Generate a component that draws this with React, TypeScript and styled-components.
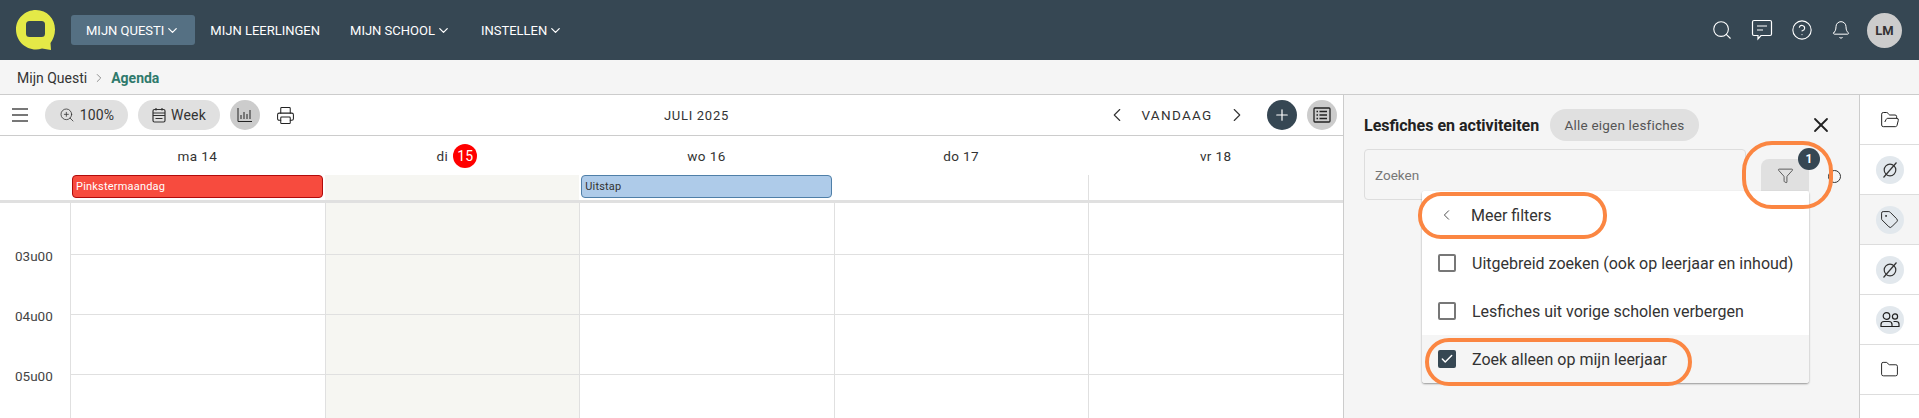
import React from 'react';
import styled, { createGlobalStyle } from 'styled-components';
import {
  Bell,
  Check,
  ChevronDown,
  ChevronLeft,
  ChevronRight,
  CircleHelp,
  Folder,
  FolderOpen,
  Funnel,
  Plus,
  Printer,
  Search,
  Tag,
  X,
  ZoomIn,
} from 'lucide-react';

const GlobalStyle = createGlobalStyle`
  html, body {
    margin: 0;
    padding: 0;
    background: #fff;
    overflow: hidden;
  }
  * { box-sizing: border-box; }
  body { font-family: Roboto, "Liberation Sans", sans-serif; color: #333; }
`;

const Page = styled.div`
  width: 1919px;
  height: 418px;
  overflow: hidden;
  display: flex;
  flex-direction: column;
`;

// top bar
const Header = styled.header`
  height: 60px;
  flex: none;
  background: #364753;
  display: flex;
  align-items: center;
  padding: 0 17px 0 16px;
`;

const LogoWrap = styled.div`
  width: 40px;
  height: 40px;
  margin-right: 15px;
`;

const Nav = styled.nav`
  display: flex;
  align-items: center;
`;

const NavItem = styled.div<{ $active?: boolean }>`
  height: 30px;
  display: flex;
  align-items: center;
  gap: 1px;
  padding: 0 15px;
  border-radius: 3px;
  color: #fff;
  font-size: 13px;
  white-space: nowrap;
  background: ${(p) => (p.$active ? '#557083' : 'transparent')};
`;

const HeaderIcons = styled.div`
  margin-left: auto;
  display: flex;
  align-items: center;
  gap: 18px;
  color: #fff;
`;

const Avatar = styled.div`
  width: 35px;
  height: 35px;
  margin-left: -2px;
  border-radius: 50%;
  background: #ccc;
  color: #333;
  font-size: 13px;
  font-weight: 700;
  display: flex;
  align-items: center;
  justify-content: center;
`;

// breadcrumb
const Breadcrumb = styled.div`
  height: 35px;
  flex: none;
  background: #f5f5f5;
  border-bottom: 1px solid #ccc;
  display: flex;
  align-items: center;
  gap: 5px;
  padding: 1px 0 0 17px;
  font-size: 14px;
`;

const CrumbCurrent = styled.span`
  color: #2f7a6c;
  font-weight: 700;
`;

const Main = styled.div`
  flex: 1;
  display: flex;
  min-height: 0;
`;

const CalendarArea = styled.section`
  width: 1343px;
  flex: none;
  display: flex;
  flex-direction: column;
`;

// agenda toolbar
const Toolbar = styled.div`
  height: 41px;
  flex: none;
  border-bottom: 1px solid #ccc;
  display: flex;
  align-items: center;
  padding: 0 6px 0 12px;
`;

const ToolGroup = styled.div`
  width: 652px;
  display: flex;
  align-items: center;
`;

const MenuButton = styled.div`
  width: 16px;
  height: 14px;
  margin-right: 17px;
  border-top: 2px solid #777;
  border-bottom: 2px solid #777;
  position: relative;

  &::after {
    content: '';
    position: absolute;
    left: 0;
    right: 0;
    top: 4px;
    height: 2px;
    background: #777;
  }
`;

const Pill = styled.div<{ $width: number }>`
  width: ${(p) => p.$width}px;
  height: 30px;
  margin-right: 10px;
  border-radius: 15px;
  background: #e0e0e0;
  display: flex;
  align-items: center;
  justify-content: center;
  gap: 5px;
  font-size: 14px;
  letter-spacing: 0.2px;
`;

const RoundButton = styled.div<{ $bg: string; $color: string }>`
  width: 30px;
  height: 30px;
  border-radius: 50%;
  background: ${(p) => p.$bg};
  color: ${(p) => p.$color};
  display: flex;
  align-items: center;
  justify-content: center;
  flex: none;
`;

const PrintIcon = styled.div`
  display: flex;
  margin-left: 16px;
  color: #222;
`;

const MonthTitle = styled.div`
  font-size: 13px;
  letter-spacing: 0.7px;
  white-space: nowrap;
`;

const DateNav = styled.div`
  margin-left: auto;
  display: flex;
  align-items: center;
  gap: 8px;
`;

const Today = styled.div`
  width: 82px;
  text-align: center;
  font-size: 13.5px;
  letter-spacing: 1.3px;
`;

const ChevronBox = styled.div`
  display: flex;
  color: #333;
`;

const ToolEnd = styled.div`
  display: flex;
  gap: 10px;
  margin-left: 19px;
`;

// calendar grid
const WeekRow = styled.div<{ $height: number }>`
  height: ${(p) => p.$height}px;
  flex: none;
  display: grid;
  grid-template-columns: 70px repeat(5, 1fr);
`;

const DayTitle = styled.div<{ $today?: boolean }>`
  display: flex;
  align-items: center;
  justify-content: center;
  gap: 5px;
  font-size: 13.5px;
  letter-spacing: 0.4px;
  padding-left: ${(p) => (p.$today ? '10px' : '0')};
`;

const TodayBadge = styled.span`
  width: 24px;
  height: 24px;
  border-radius: 50%;
  background: #f00;
  color: #fff;
  display: flex;
  align-items: center;
  justify-content: center;
  font-size: 14px;
  letter-spacing: 0;
`;

const AllDayBand = styled.div`
  flex: none;
  border-bottom: 3px solid #e0e0e0;
`;

const AllDayCell = styled.div<{ $today?: boolean; $line?: boolean }>`
  padding: 0 2px;
  background: ${(p) => (p.$today ? '#f6f6f2' : 'transparent')};
  border-left: ${(p) => (p.$line ? '1px solid #e0e0e0' : 'none')};
`;

const EventChip = styled.div<{ $bg: string; $border: string; $color: string }>`
  height: 23px;
  border-radius: 4px;
  background: ${(p) => p.$bg};
  border: 1px solid ${(p) => p.$border};
  color: ${(p) => p.$color};
  font-size: 11px;
  display: flex;
  align-items: center;
  padding-left: 3px;
  letter-spacing: 0.2px;
`;

const HourLabel = styled.div`
  font-size: 13.5px;
  padding-left: 15px;
  line-height: 16px;
  margin-top: -6px;
  color: #444;
`;

const HourCell = styled.div<{ $today?: boolean; $line?: boolean }>`
  border-left: 1px solid #e0e0e0;
  border-top: ${(p) => (p.$line ? '1px solid #e0e0e0' : 'none')};
  background: ${(p) => (p.$today ? '#f6f6f2' : 'transparent')};
`;

// side panel
const Panel = styled.aside`
  width: 516px;
  flex: none;
  position: relative;
  background: #f5f5f5;
  border-left: 1px solid #ccc;
  padding: 14px 0 0 20px;
`;

const PanelHead = styled.div`
  display: flex;
  align-items: center;
  height: 32px;
`;

const PanelTitle = styled.h2`
  width: 186px;
  flex: none;
  margin: 0;
  font-size: 16px;
  font-weight: 700;
  color: #222;
  white-space: nowrap;
`;

const ScopePill = styled.div`
  width: 149px;
  height: 32px;
  border-radius: 16px;
  background: #e0e0e0;
  color: #555;
  font-size: 13.5px;
  letter-spacing: 0.2px;
  display: flex;
  align-items: center;
  justify-content: center;
  white-space: nowrap;
`;

const CloseButton = styled.div`
  margin-left: 110px;
  display: flex;
  color: #222;
`;

const SearchRow = styled.div`
  display: flex;
  align-items: center;
  margin-top: 8px;
`;

const SearchBox = styled.div`
  width: 382px;
  height: 51px;
  border: 1px solid #ddd;
  border-radius: 4px;
  display: flex;
  align-items: center;
  padding-left: 10px;
  font-size: 13.5px;
  color: #777;
`;

const FilterButton = styled.div`
  width: 48px;
  height: 32px;
  margin: 0 0 9px 15px;
  border-radius: 8px 8px 0 0;
  background: #e0e0e0;
  color: #444;
  display: flex;
  align-items: center;
  justify-content: center;
  align-self: flex-end;
  position: relative;
`;

const CountBadge = styled.span`
  position: absolute;
  top: -11px;
  right: -11px;
  width: 22px;
  height: 22px;
  border-radius: 50%;
  background: #364753;
  color: #fff;
  font-size: 12px;
  font-weight: 700;
  display: flex;
  align-items: center;
  justify-content: center;
`;

const ResetCircle = styled.span`
  position: absolute;
  left: 484px;
  top: 75px;
  width: 13px;
  height: 13px;
  border: 1px solid #333;
  border-radius: 50%;
`;

const Dropdown = styled.div`
  position: absolute;
  left: 78px;
  top: 96px;
  width: 387px;
  background: #fff;
  border-radius: 3px;
  box-shadow: 0 1px 2px rgba(0, 0, 0, 0.4);
  overflow: hidden;
`;

const MenuRow = styled.div<{ $selected?: boolean }>`
  height: 48px;
  display: flex;
  align-items: center;
  padding-left: 16px;
  gap: 16px;
  font-size: 16px;
  color: #333;
  white-space: nowrap;
  background: ${(p) => (p.$selected ? '#f5f5f5' : '#fff')};
`;

const BackIcon = styled.div`
  width: 17px;
  display: flex;
  color: #333;
`;

const CheckBox = styled.span<{ $checked?: boolean }>`
  width: 18px;
  height: 18px;
  border-radius: 2px;
  border: 2px solid ${(p) => (p.$checked ? '#364753' : '#777')};
  background: ${(p) => (p.$checked ? '#364753' : 'transparent')};
  color: #fff;
  display: flex;
  align-items: center;
  justify-content: center;
  flex: none;
`;

// orange marks drawn over the screenshot
const Ring = styled.div<{ $left: number; $top: number; $width: number; $height: number; $radius: number }>`
  position: absolute;
  left: ${(p) => p.$left}px;
  top: ${(p) => p.$top}px;
  width: ${(p) => p.$width}px;
  height: ${(p) => p.$height}px;
  border: 4px solid #fb8642;
  border-radius: ${(p) => p.$radius}px;
  pointer-events: none;
`;

// right rail
const Rail = styled.aside`
  flex: 1;
  border-left: 1px solid #ccc;
  background: #fff;
`;

const RailItem = styled.div<{ $active?: boolean }>`
  height: 50px;
  border-bottom: 1px solid #ddd;
  background: ${(p) => (p.$active ? '#f5f5f5' : '#fff')};
  display: flex;
  align-items: center;
  justify-content: center;
  color: #222;
`;

const RailCircle = styled.div`
  width: 28px;
  height: 28px;
  border-radius: 50%;
  background: #e2e8ed;
  display: flex;
  align-items: center;
  justify-content: center;
`;

const Logo = () => (
  <svg width="40" height="40" viewBox="0 0 40 40">
    <path
      d="M20 0C31 0 39 8.500 39 19.500C39 25 37 29.500 34.500 33L35 40L26 38.500C24 39 22 39.500 20 39.500C9 39.500 0 30.500 0 19.500C0 8.500 9 0 20 0Z"
      fill="#e4e947"
    />
    <rect x="10" y="11" width="19" height="16" rx="3.500" fill="#364753" />
  </svg>
);

const ChatIcon = () => (
  <svg width="22" height="22" viewBox="0 0 22 22" fill="none" stroke="currentColor" strokeWidth="1.2">
    <path d="M3 1.500H19Q20.500 1.500 20.500 3V15Q20.500 16.500 19 16.500H10L7 20V16.500H3Q1.500 16.500 1.500 15V3Q1.500 1.500 3 1.500Z" />
    <path d="M6 7H16M6 11H12" />
  </svg>
);

const EmptySet = () => (
  <svg width="18" height="18" viewBox="0 0 18 18" fill="none" stroke="#333" strokeWidth="1.2">
    <circle cx="9" cy="9" r="5.800" />
    <path d="M15.500 1.500L2.500 16.500" />
  </svg>
);

const ChartIcon = () => (
  <svg width="16" height="16" viewBox="0 0 16 16" fill="none" stroke="#222" strokeWidth="1">
    <path d="M1 1V14.500H15" />
    <path d="M4 12V8M7 12V5M10 12V7M13 12V3" />
  </svg>
);

const ListBoxIcon = () => (
  <svg width="18" height="16" viewBox="0 0 18 16" fill="none" stroke="#222" strokeWidth="1.300">
    <rect x="1" y="1" width="16" height="14" rx="1" />
    <path d="M6.500 4.500H14M6.500 8H14M6.500 11.500H14M3.500 4.500H5M3.500 8H5M3.500 11.500H5" />
  </svg>
);

const WeekIcon = () => (
  <svg width="14" height="16" viewBox="0 0 14 16" fill="none" stroke="#333" strokeWidth="1.200">
    <rect x="1" y="2.500" width="12" height="12.500" rx="1.500" />
    <path d="M1 6H13M1 8.500H13M4 1V3.500M10 1V3.500M3.500 11.500H10.500" />
  </svg>
);

const PeopleIcon = () => (
  <svg width="20" height="18" viewBox="0 0 20 18" fill="none" stroke="#222" strokeWidth="1.200">
    <circle cx="6.500" cy="5" r="3.300" />
    <circle cx="15" cy="5.500" r="2.600" />
    <path d="M1 15.500V13.500Q1 10.500 4 10.500H9Q12 10.500 12 13.500V15.500Z" />
    <path d="M13.500 10.500H16Q19 10.500 19 13V15.500H12" />
  </svg>
);

const days = ['ma 14', 'di', 'wo 16', 'do 17', 'vr 18'];
const hours = ['', '03u00', '04u00', '05u00'];

const App = () => {
  return (
    <Page>
      <GlobalStyle />
      <Header>
        <LogoWrap>
          <Logo />
        </LogoWrap>
        <Nav>
          <NavItem $active>
            MIJN QUESTI <ChevronDown size={15} />
          </NavItem>
          <NavItem>MIJN LEERLINGEN</NavItem>
          <NavItem>
            MIJN SCHOOL <ChevronDown size={15} />
          </NavItem>
          <NavItem>
            INSTELLEN <ChevronDown size={15} />
          </NavItem>
        </Nav>
        <HeaderIcons>
          <Search size={22} strokeWidth={1.2} />
          <ChatIcon />
          <CircleHelp size={22} strokeWidth={1.2} />
          <Bell size={20} strokeWidth={1.2} />
          <Avatar>LM</Avatar>
        </HeaderIcons>
      </Header>

      <Breadcrumb>
        <span>Mijn Questi</span>
        <ChevronRight size={14} strokeWidth={1.2} color="#666" />
        <CrumbCurrent>Agenda</CrumbCurrent>
      </Breadcrumb>

      <Main>
        <CalendarArea>
          <Toolbar>
            <ToolGroup>
              <MenuButton />
              <Pill $width={83}>
                <ZoomIn size={16} strokeWidth={1.2} /> 100%
              </Pill>
              <Pill $width={82}>
                <WeekIcon /> Week
              </Pill>
              <RoundButton $bg="#ccc" $color="#222">
                <ChartIcon />
              </RoundButton>
              <PrintIcon>
                <Printer size={19} strokeWidth={1.3} />
              </PrintIcon>
            </ToolGroup>
            <MonthTitle>JULI 2025</MonthTitle>
            <DateNav>
              <ChevronBox>
                <ChevronLeft size={22} strokeWidth={1.2} />
              </ChevronBox>
              <Today>VANDAAG</Today>
              <ChevronBox>
                <ChevronRight size={22} strokeWidth={1.2} />
              </ChevronBox>
            </DateNav>
            <ToolEnd>
              <RoundButton $bg="#364753" $color="#fff">
                <Plus size={18} strokeWidth={1.6} />
              </RoundButton>
              <RoundButton $bg="#ccc" $color="#222">
                <ListBoxIcon />
              </RoundButton>
            </ToolEnd>
          </Toolbar>

          <WeekRow $height={39}>
            <div />
            {days.map((day) => (
              <DayTitle key={day} $today={day === 'di'}>
                {day}
                {day === 'di' && <TodayBadge>15</TodayBadge>}
              </DayTitle>
            ))}
          </WeekRow>

          <AllDayBand>
            <WeekRow $height={25}>
              <div />
              <AllDayCell>
                <EventChip $bg="#f74b3e" $border="#b10b0b" $color="#fff">
                  Pinkstermaandag
                </EventChip>
              </AllDayCell>
              <AllDayCell $today />
              <AllDayCell>
                <EventChip $bg="#aecbe9" $border="#4f7fa8" $color="#333">
                  Uitstap
                </EventChip>
              </AllDayCell>
              <AllDayCell />
              <AllDayCell $line />
            </WeekRow>
          </AllDayBand>

          {hours.map((hour, row) => (
            <WeekRow key={row} $height={row === 0 ? 51 : 60}>
              <HourLabel>{hour}</HourLabel>
              {days.map((day) => (
                <HourCell key={day} $line={row > 0} $today={day === 'di'} />
              ))}
            </WeekRow>
          ))}
        </CalendarArea>

        <Panel>
          <PanelHead>
            <PanelTitle>Lesfiches en activiteiten</PanelTitle>
            <ScopePill>Alle eigen lesfiches</ScopePill>
            <CloseButton>
              <X size={24} strokeWidth={1.8} />
            </CloseButton>
          </PanelHead>
          <SearchRow>
            <SearchBox>Zoeken</SearchBox>
            <FilterButton>
              <Funnel size={17} strokeWidth={1.2} />
              <CountBadge>1</CountBadge>
            </FilterButton>
          </SearchRow>
          <ResetCircle />
          <Dropdown>
            <MenuRow>
              <BackIcon>
                <ChevronLeft size={20} strokeWidth={1.2} />
              </BackIcon>
              Meer filters
            </MenuRow>
            <MenuRow>
              <CheckBox />
              Uitgebreid zoeken (ook op leerjaar en inhoud)
            </MenuRow>
            <MenuRow>
              <CheckBox />
              Lesfiches uit vorige scholen verbergen
            </MenuRow>
            <MenuRow $selected>
              <CheckBox $checked>
                <Check size={14} strokeWidth={2.5} />
              </CheckBox>
              Zoek alleen op mijn leerjaar
            </MenuRow>
          </Dropdown>
          <Ring $left={398} $top={46} $width={91} $height={68} $radius={30} />
          <Ring $left={74} $top={97} $width={189} $height={47} $radius={23} />
          <Ring $left={81} $top={243} $width={267} $height={48} $radius={24} />
        </Panel>

        <Rail>
          <RailItem>
            <FolderOpen size={20} strokeWidth={1.2} />
          </RailItem>
          <RailItem>
            <RailCircle>
              <EmptySet />
            </RailCircle>
          </RailItem>
          <RailItem $active>
            <RailCircle>
              <Tag size={19} strokeWidth={1.2} />
            </RailCircle>
          </RailItem>
          <RailItem>
            <RailCircle>
              <EmptySet />
            </RailCircle>
          </RailItem>
          <RailItem>
            <RailCircle>
              <PeopleIcon />
            </RailCircle>
          </RailItem>
          <RailItem>
            <Folder size={19} strokeWidth={1.2} />
          </RailItem>
        </Rail>
      </Main>
    </Page>
  );
};

export default App;
